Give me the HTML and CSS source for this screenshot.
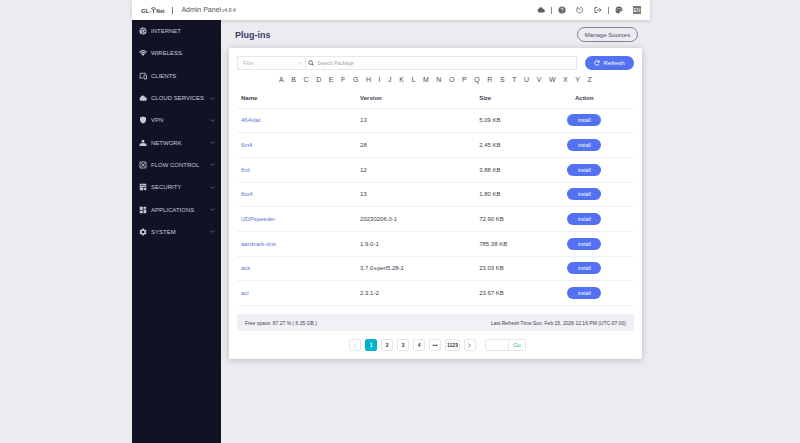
FILE: index.html
```html
<!DOCTYPE html>
<html lang="en">
<head>
<meta charset="utf-8">
<title>GL.iNet Admin Panel</title>
<link rel="stylesheet" href="styles.css">
</head>
<body>
<div class="shell">
<header class="topbar">
  <a class="logo" href="#" aria-label="GL.iNet"><span>GL</span><span class="dot">·</span><span class="logo-i"><svg viewBox="0 0 8 10"><path d="M0 2.600Q4 -.6 8 2.600M2 4.400Q4 3 6 4.400M4 4v6" fill="none" stroke="currentColor" stroke-width="1.300"/></svg></span><span class="logo-net">Net</span></a>
  <span class="rule"></span>
  <span class="panel">Admin Panel</span><span class="version">v4.8.4</span>
  <nav class="tools">
    <a href="#" aria-label="Cloud"><svg viewBox="0 0 16 16"><path d="M4 13a4 4 0 0 1-.5-7.5A4.5 4.5 0 0 1 12 6a3.5 3.5 0 0 1 .5 7z" fill="currentColor"/></svg></a>
    <i></i>
    <a href="#" aria-label="Help"><svg viewBox="0 0 16 16"><circle cx="8" cy="8" r="7" fill="currentColor"/><path d="M5.8 6.2a2.2 2.2 0 1 1 3.4 1.9Q8 8.8 8 10M8 11.2v1.6" fill="none" stroke="#fff" stroke-width="1.6"/></svg></a>
    <a href="#" aria-label="Reboot"><svg viewBox="0 0 16 16"><path d="M3.3 3.5A6 6 0 1 0 8 2M3 1.5v3h3M8 4.5v4" fill="none" stroke="currentColor" stroke-width="1.5"/></svg></a>
    <a href="#" aria-label="Log out"><svg viewBox="0 0 16 16"><path d="M7 3H2v10h5M6 8h8M10.5 4.5 14 8l-3.500 3.500" fill="none" stroke="currentColor" stroke-width="1.800"/></svg></a>
    <i></i>
    <a href="#" aria-label="Theme"><svg viewBox="0 0 16 16"><path fill-rule="evenodd" d="M8 1a7 7 0 0 0 0 14c2 0 1.500-1.500 1.200-2.300-.5-1.500.3-2.400 1.800-2.400h2c1.200 0 2-.8 2-2.300C15 4 12 1 8 1zM4 7a1 1 0 1 0 .1 0zM6 4a1 1 0 1 0 .1 0zM10 4a1 1 0 1 0 .1 0zM12.200 6.500a1 1 0 1 0 .1 0z" fill="currentColor"/></svg></a>
    <a href="#" class="lang"><span>EN</span></a>
  </nav>
</header>
<aside class="sidebar">
  <nav class="menu">
    <a href="#"><svg class="ico" viewBox="0 0 16 16"><circle cx="8" cy="8" r="7" fill="currentColor"/><path d="M2 6l4-2 1 2-2 2 2 2-1 4M10 2l-1 3 3 1 2-1M14 9l-4 0 0 4" fill="none" stroke="#111226" stroke-width="1.500"/></svg><span>INTERNET</span></a>
    <a href="#"><svg class="ico" viewBox="0 0 16 16"><path d="M1 6.500Q8 0 15 6.500M3.500 9.200Q8 5 12.500 9.200" fill="none" stroke="currentColor" stroke-width="2.200"/><path d="M5.200 10.500Q8 8.500 10.800 10.500L8 14z" fill="currentColor"/></svg><span>WIRELESS</span></a>
    <a href="#"><svg class="ico" viewBox="0 0 16 16"><path d="M13 4V2.500H2.500V11M0 12h8M10 6h5v8h-5z" fill="none" stroke="currentColor" stroke-width="1.600"/></svg><span>CLIENTS</span></a>
    <a href="#"><svg class="ico" viewBox="0 0 16 16"><path d="M4 13.500a4 4 0 0 1-.5-7.500A4.500 4.500 0 0 1 12 6.500a3.500 3.500 0 0 1 .5 7z" fill="currentColor"/></svg><span>CLOUD SERVICES</span><svg class="chev" viewBox="0 0 8 8"><path d="M1 2.500l3 3 3-3"/></svg></a>
    <a href="#"><svg class="ico" viewBox="0 0 16 16"><path d="M8 1l6 2v5c0 3.500-3 6-6 7-3-1-6-3.500-6-7V3z" fill="currentColor"/></svg><span>VPN</span><svg class="chev" viewBox="0 0 8 8"><path d="M1 2.500l3 3 3-3"/></svg></a>
    <a href="#"><svg class="ico" viewBox="0 0 16 16"><path d="M5.500 2h5v4.500h-5zM7.300 6h1.400v3H7.300zM2.500 8.500h11V11h-11zM1 10.500h14V14H1z" fill="currentColor"/></svg><span>NETWORK</span><svg class="chev" viewBox="0 0 8 8"><path d="M1 2.500l3 3 3-3"/></svg></a>
    <a href="#"><svg class="ico" viewBox="0 0 16 16"><path d="M2 2h12v12H2z" fill="none" stroke="currentColor" stroke-width="1.600"/><path d="M4 4l3 3M12 4L9 7M4 12l3-3M12 12L9 9M8 5v6M5 8h6" stroke="currentColor" stroke-width="1.400"/></svg><span>FLOW CONTROL</span><svg class="chev" viewBox="0 0 8 8"><path d="M1 2.500l3 3 3-3"/></svg></a>
    <a href="#"><svg class="ico" viewBox="0 0 16 16"><path d="M1.500 1.500h13V8h-6v6.500h-7z" fill="currentColor"/><path d="M2 5h12M2 9h6M6 2v3M10 5v3" stroke="#111226"/><path d="M9.500 9.500H15V12q-1 2-2.700 3-2-1-2.800-3z" fill="currentColor"/></svg><span>SECURITY</span><svg class="chev" viewBox="0 0 8 8"><path d="M1 2.500l3 3 3-3"/></svg></a>
    <a href="#"><svg class="ico" viewBox="0 0 16 16"><path d="M1.500 1.500h6v7h-6zM9 1.500h5.500v4H9zM1.500 10h6v4.500h-6zM9 7h5.500v7.500H9z" fill="currentColor"/></svg><span>APPLICATIONS</span><svg class="chev" viewBox="0 0 8 8"><path d="M1 2.500l3 3 3-3"/></svg></a>
    <a href="#"><svg class="ico" viewBox="0 0 16 16"><path fill-rule="evenodd" d="M6.500 1h3l.5 2 1.500.8 2-.6 1.500 2.600L13.600 7.200v1.600l1.400 1.400-1.500 2.600-2-.6L10 13l-.5 2h-3L6 13l-1.500-.8-2 .6L1 10.200l1.400-1.400V7.200L1 5.800l1.500-2.600 2 .6L6 3zM8 5.300a2.700 2.700 0 1 0 .1 0z" fill="currentColor"/></svg><span>SYSTEM</span><svg class="chev" viewBox="0 0 8 8"><path d="M1 2.500l3 3 3-3"/></svg></a>
  </nav>
</aside>
<main class="content">
  <div class="heading"><h1>Plug-ins</h1><button class="sources">Manage Sources</button></div>
  <section class="card">
    <form class="filters">
      <div class="fields">
        <label class="filter"><select aria-label="Filter"><option>Filter</option></select><svg class="chev" viewBox="0 0 8 8"><path d="M1 2.500l3 3 3-3"/></svg></label>
        <label class="search"><svg viewBox="0 0 16 16"><circle cx="7" cy="7" r="5" fill="none" stroke="currentColor" stroke-width="2"/><path d="M10.500 10.500L15 15" stroke="currentColor" stroke-width="2.500"/></svg><input type="text" aria-label="Search Package" placeholder="Search Package"></label>
      </div>
      <button type="button" class="refresh"><svg viewBox="0 0 16 16"><path d="M13.500 10A6 6 0 1 1 12.500 4M14 1v5H9" fill="none" stroke="currentColor" stroke-width="2.400"/></svg>Refresh</button>
    </form>
    <nav class="letters"><a href="#">A</a><a href="#">B</a><a href="#">C</a><a href="#">D</a><a href="#">E</a><a href="#">F</a><a href="#">G</a><a href="#">H</a><a href="#">I</a><a href="#">J</a><a href="#">K</a><a href="#">L</a><a href="#">M</a><a href="#">N</a><a href="#">O</a><a href="#">P</a><a href="#">Q</a><a href="#">R</a><a href="#">S</a><a href="#">T</a><a href="#">U</a><a href="#">V</a><a href="#">W</a><a href="#">X</a><a href="#">Y</a><a href="#">Z</a></nav>
    <table>
      <colgroup><col class="wide"><col class="wide"><col class="narrow"><col class="action"></colgroup>
      <thead><tr><th>Name</th><th>Version</th><th>Size</th><th>Action</th></tr></thead>
      <tbody>
        <tr><td><a href="#">464xlat</a></td><td>13</td><td>5.09 KB</td><td><button>install</button></td></tr>
        <tr><td><a href="#">6in4</a></td><td>28</td><td>2.45 KB</td><td><button>install</button></td></tr>
        <tr><td><a href="#">6rd</a></td><td>12</td><td>3.88 KB</td><td><button>install</button></td></tr>
        <tr><td><a href="#">6to4</a></td><td>13</td><td>1.80 KB</td><td><button>install</button></td></tr>
        <tr><td><a href="#">UDPspeeder</a></td><td>20230206.0-1</td><td>72.90 KB</td><td><button>install</button></td></tr>
        <tr><td><a href="#">aardvark-dns</a></td><td>1.9.0-1</td><td>785.38 KB</td><td><button>install</button></td></tr>
        <tr><td><a href="#">ack</a></td><td>3.7.0+perl5.28-1</td><td>23.03 KB</td><td><button>install</button></td></tr>
        <tr><td><a href="#">acl</a></td><td>2.3.1-2</td><td>23.67 KB</td><td><button>install</button></td></tr>
      </tbody>
    </table>
    <div class="status"><span>Free space: 87.27 % ( 6.35 GB )</span><span>Last Refresh Time:Sun, Feb 15, 2026 12:16 PM (UTC-07:00)</span></div>
    <div class="pager">
      <button disabled aria-label="Previous"><svg viewBox="0 0 8 8"><path d="M5.500 1l-3 3 3 3"/></svg></button>
      <button class="current">1</button><button>2</button><button>3</button><button>4</button><button>•••</button><button>1123</button>
      <button aria-label="Next"><svg viewBox="0 0 8 8"><path d="M2.500 1l3 3-3 3"/></svg></button>
      <div class="jump"><input type="text" aria-label="Page"><button>Go</button></div>
    </div>
  </section>
</main>
</div>
</body>
</html>
```
FILE: styles.css
```css
* { box-sizing: border-box; }
body {
  margin: 0;
  background: #ecebf0;
  color: #3c3d4c;
  font: 6px/8px "Liberation Sans", Arial, sans-serif;
  display: grid;
  grid-template-columns: 132fr 518fr 150fr;
}
a { color: inherit; text-decoration: none; }
button, input, select { font: inherit; color: inherit; margin: 0; padding: 0; }
button { cursor: pointer; }
svg { display: block; flex: none; }

.shell {
  grid-column: 2;
  display: grid;
  grid-template-columns: 89px 1fr;
  grid-template-rows: 20px 1fr;
  min-height: 100vh;
}
.topbar {
  grid-column: 1 / 3;
  display: flex;
  align-items: center;
  padding: 0 4px 0 9px;
  background: #fff;
  box-shadow: 0 1px 4px rgba(0, 0, 0, .16);
}
.logo { display: flex; align-items: center; font-weight: bold; color: #444; padding-top: 2px; }
.logo svg { width: 5px; height: 8px; margin-bottom: 3px; }
.logo-net { font-size: 5px; }
.rule { width: 1px; height: 7px; background: #777; margin: 0 8px; }
.panel { font-size: 7px; color: #555; }
.version { font-size: 5px; color: #555; margin-left: 1px; }
.tools { margin-left: auto; display: flex; align-items: center; color: #606060; }
.tools a { width: 18px; display: flex; justify-content: center; }
.tools svg { width: 8px; height: 8px; }
.tools i { width: 1px; height: 7px; margin: 0 1px; background: #888; }
.lang span { background: #777; color: #fff; font-size: 5px; line-height: 8px; width: 8px; text-align: center; }

.sidebar { background: #111226; color: #c9c9d8; }
.menu { display: grid; grid-auto-rows: 1fr; height: 223px; }
.menu a { display: flex; align-items: center; padding: 0 6px 0 7px; }
.menu span { margin-left: 4px; }
.ico { width: 8px; height: 8px; }
.chev { width: 5px; height: 5px; margin-left: auto; fill: none; stroke: #8d8ea0; stroke-width: 1; }

.content { padding: 7px 8px; }
.heading { display: flex; justify-content: space-between; align-items: center; padding: 0 4px 0 6px; margin-bottom: 6px; }
h1 { margin: 0; font-size: 9px; line-height: 12px; color: #3b3c68; }
.sources { width: 61px; height: 15px; border: 1px solid #7d7e9a; border-radius: 8px; background: transparent; color: #4a4b68; }

.card { background: #fff; border-radius: 2px; padding: 8px; box-shadow: 0 1px 7px rgba(0, 0, 0, .22); }
.filters { display: flex; gap: 8px; }
.fields { flex: 1; display: flex; border: 1px solid #e6e7eb; height: 14px; }
.filter { width: 68px; display: flex; align-items: center; padding: 0 3px 0 5px; border-right: 1px solid #e6e7eb; }
.filter select { flex: 1; appearance: none; border: 0; background: none; color: #b4b5bb; font-size: 5px; }
.filter .chev { stroke: #b4b5bb; }
.search { flex: 1; display: flex; align-items: center; padding-left: 2px; gap: 3px; }
.search svg { width: 6px; height: 6px; color: #444; }
.search input { flex: 1; min-width: 0; border: 0; outline: 0; background: none; height: 10px; font-size: 5px; }
.search input::placeholder { color: #a4a5ab; }
.refresh { display: flex; align-items: center; justify-content: center; gap: 3px; width: 49px; height: 14px; border: 0; border-radius: 7px; background: #5272f2; color: #fff; }
.refresh svg { width: 6px; height: 6px; }
.letters { display: flex; justify-content: space-between; margin-top: 5px; padding: 0 42px; font-size: 7px; line-height: 9px; color: #4c4d55; }

table { width: 100%; height: 222px; table-layout: fixed; border-collapse: collapse; }
.wide { width: 30%; }
.narrow { width: 15%; }
.action { width: 25%; }
th, td { height: 24px; padding: 0 0 0 4px; text-align: left; vertical-align: middle; border-bottom: 1px solid #f0f1f5; white-space: nowrap; }
th { padding-top: 5px; }
td a { color: #5c78d8; }
th:last-child, td:last-child { padding-left: 0; text-align: center; }
td button { display: block; margin: 0 auto; width: 34px; height: 12px; border: 0; border-radius: 6px; background: #5272f2; color: #fff; font-size: 5px; }

.status { display: flex; justify-content: space-between; align-items: center; height: 17px; margin-top: 8px; padding: 0 8px; background: #f1f0f6; font-size: 5px; }
.pager { display: flex; justify-content: center; gap: 4px; margin-top: 8px; padding-left: 4px; font-size: 5px; font-weight: bold; }
.pager button { min-width: 12px; height: 12px; padding: 0 1px; border: 1px solid #e6e6ea; border-radius: 2px; background: #fff; color: #333; display: flex; align-items: center; justify-content: center; }
.pager svg { width: 5px; height: 5px; fill: none; stroke: currentColor; stroke-width: 1; }
.pager button:disabled { color: #bbb; }
.pager .current { background: #00b5cb; border-color: #00b5cb; color: #fff; }
.jump { display: flex; width: 41px; height: 12px; margin-left: 5px; border: 1px solid #e6e6ea; border-radius: 2px; }
.jump input { flex: 1; min-width: 0; border: 0; background: none; }
.pager .jump button { width: 17px; height: 10px; border: 0; border-left: 1px solid #e6e6ea; border-radius: 0; color: #27b9a5; font-size: 6px; font-weight: normal; }
```
